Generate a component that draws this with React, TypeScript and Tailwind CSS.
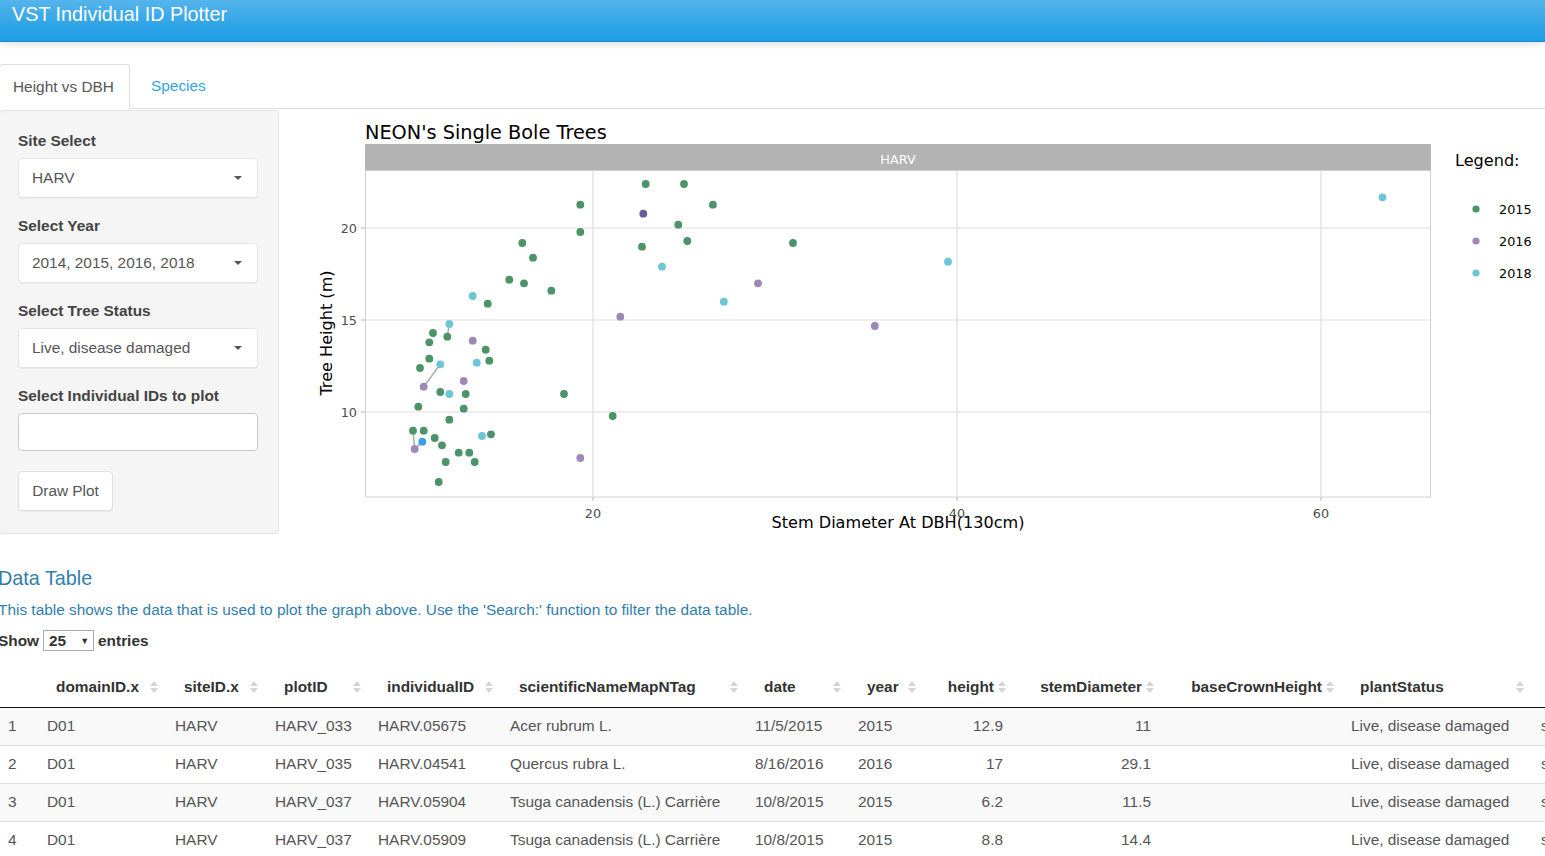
import React from "react";

const G = "#4b9368";
const P = "#9e89b6";
const C = "#6dc6d6";

const points: [number, number, string][] = [
  [645.7, 184, G], [684, 184, G], [580.3, 204.7, G], [712.9, 204.7, G], [678.3, 224.7, G],
  [580.3, 232, G], [642, 246.7, G], [687.3, 241, G], [793, 243, G], [522.3, 243, G],
  [533, 257.7, G], [509.3, 279.7, G], [524, 283.3, G], [551.3, 290.7, G], [487.7, 303.7, G],
  [447.3, 336.7, G], [433, 333, G], [429.3, 342.3, G], [485.7, 349.7, G], [489.3, 360.7, G],
  [429.3, 358.7, G], [420, 368, G], [440.3, 392, G], [465.7, 394, G], [564, 394, G],
  [418.3, 406.7, G], [463.7, 408.7, G], [449.3, 419.7, G], [612.7, 416, G], [413, 430.7, G],
  [423.7, 430.7, G], [491, 434.3, G], [434.7, 438, G], [442, 445.3, G], [458.7, 452.7, G],
  [469.3, 452.7, G], [445.7, 462, G], [474.7, 462, G], [438.7, 482, G],
  [472.7, 340.7, P], [463.7, 381, P], [423.7, 386.7, P], [620.3, 316.7, P], [414.7, 449, P],
  [580.3, 458, P], [758, 283.3, P], [874.8, 326, P],
  [449.3, 324, C], [476.7, 362.7, C], [440.3, 364.3, C], [449.3, 394, C], [482, 436, C],
  [662, 266.7, C], [472.7, 296, C], [1382.5, 197.3, C], [948, 261.7, C], [723.8, 301.7, C],
  [422.3, 441.7, "#3aa0de"], [643.3, 213.7, "#60609a"],
];

const links: [number, number, number, number][] = [
  [423.7, 386.7, 440.3, 364.3],
  [413, 430.7, 414.7, 449],
  [414.7, 449, 422.3, 441.7],
  [449.3, 324, 447.3, 336.7],
];

function Plot() {
  const font = "'DejaVu Sans', Verdana, sans-serif";
  return (
    <svg width={1265} height={430} viewBox="280 110 1265 430" style={{ fontFamily: font }}>
      <text x={365} y={139} fontSize={19.3} fill="#000">NEON's Single Bole Trees</text>
      <rect x={365} y={144} width={1066} height={26} fill="#b3b3b3" />
      <text x={898} y={163.5} fontSize={12.8} fill="#ffffff" textAnchor="middle">HARV</text>
      <rect x={365.5} y={170.5} width={1065} height={326.5} fill="#fff" stroke="#cfcfcf" />
      {[228, 320, 412].map((y) => (
        <line key={y} x1={366} x2={1430} y1={y} y2={y} stroke="#dedede" strokeWidth={1.2} />
      ))}
      {[593, 957, 1321].map((x) => (
        <line key={x} x1={x} x2={x} y1={171} y2={496} stroke="#dedede" strokeWidth={1.2} />
      ))}
      {[593, 957, 1321].map((x) => (
        <line key={"t" + x} x1={x} x2={x} y1={497} y2={501} stroke="#b3b3b3" />
      ))}
      {[228, 320, 412].map((y) => (
        <line key={"t" + y} x1={361} x2={365} y1={y} y2={y} stroke="#b3b3b3" />
      ))}
      {[
        [228, "20"],
        [320, "15"],
        [412, "10"],
      ].map(([y, t]) => (
        <text key={t} x={357} y={(y as number) + 4.5} fontSize={12.8} fill="#4d4d4d" textAnchor="end">
          {t}
        </text>
      ))}
      {[
        [593, "20"],
        [957, "40"],
        [1321, "60"],
      ].map(([x, t]) => (
        <text key={t} x={x as number} y={518} fontSize={12.8} fill="#4d4d4d" textAnchor="middle">
          {t}
        </text>
      ))}
      <text x={898} y={528} fontSize={16.1} fill="#000" textAnchor="middle">
        Stem Diameter At DBH(130cm)
      </text>
      <text
        x={0}
        y={0}
        fontSize={16.1}
        fill="#000"
        textAnchor="middle"
        transform="translate(332 333) rotate(-90)"
      >
        Tree Height (m)
      </text>
      {links.map(([x1, y1, x2, y2], i) => (
        <line key={i} x1={x1} y1={y1} x2={x2} y2={y2} stroke="#a3b5a8" strokeWidth={1.6} />
      ))}
      {points.map(([x, y, c], i) => (
        <circle key={i} cx={x} cy={y} r={3.9} fill={c} />
      ))}
      <text x={1455} y={165.5} fontSize={16.1} fill="#000">Legend:</text>
      {[
        [209, "2015", G],
        [241, "2016", P],
        [273, "2018", C],
      ].map(([y, t, c]) => (
        <g key={t as string}>
          <circle cx={1476} cy={y as number} r={3.6} fill={c as string} />
          <text x={1499} y={(y as number) + 4.5} fontSize={12.8} fill="#000">
            {t}
          </text>
        </g>
      ))}
    </svg>
  );
}

function Caret() {
  return (
    <span className="ml-auto w-0 h-0 border-l-[4px] border-r-[4px] border-t-[4px] border-l-transparent border-r-transparent border-t-[#555]" />
  );
}

function SelectBox({ value }: { value: string }) {
  return (
    <div className="flex items-center h-[40px] w-[240px] rounded-[4px] border border-[#e6e6e6] bg-white pl-[13px] pr-[15px] text-[15.4px] text-[#555] shadow-[0_1px_1px_rgba(0,0,0,0.05)]">
      <span>{value}</span>
      <Caret />
    </div>
  );
}

function Sidebar() {
  const label = "block text-[15.4px] font-bold text-[#444] leading-[20px] mb-[7px]";
  return (
    <div className="w-[280px] shrink-0 ml-[-1px] self-start rounded-[4px] border border-[#e3e3e3] bg-[#f5f5f5] pt-[20px] pb-[22px] pl-[18px]">
      <div className="mb-[18px]">
        <label className={label}>Site Select</label>
        <SelectBox value="HARV" />
      </div>
      <div className="mb-[18px]">
        <label className={label}>Select Year</label>
        <SelectBox value="2014, 2015, 2016, 2018" />
      </div>
      <div className="mb-[18px]">
        <label className={label}>Select Tree Status</label>
        <SelectBox value="Live, disease damaged" />
      </div>
      <div className="mb-[20px]">
        <label className={label}>Select Individual IDs to plot</label>
        <input className="block h-[38px] w-[240px] rounded-[4px] border border-[#c8c8c8] bg-white outline-none" />
      </div>
      <button className="h-[40px] w-[95px] rounded-[4px] border border-[#e0e0e0] bg-white text-[15.4px] text-[#555] shadow-[0_1px_1px_rgba(0,0,0,0.05)]">
        Draw Plot
      </button>
    </div>
  );
}

function SortIcon() {
  return (
    <svg width="8" height="12" viewBox="0 0 8 12" className="shrink-0">
      <path d="M4 0 L8 5 L0 5 Z" fill="#d5d5d5" />
      <path d="M0 7 L8 7 L4 12 Z" fill="#d5d5d5" />
    </svg>
  );
}

type Col = { key: string; w: number; right?: boolean; sort?: boolean };

const cols: Col[] = [
  { key: "", w: 37 },
  { key: "domainID.x", w: 128, sort: true },
  { key: "siteID.x", w: 100, sort: true },
  { key: "plotID", w: 103, sort: true },
  { key: "individualID", w: 132, sort: true },
  { key: "scientificNameMapNTag", w: 245, sort: true },
  { key: "date", w: 103, sort: true },
  { key: "year", w: 75, sort: true },
  { key: "height", w: 90, right: true, sort: true },
  { key: "stemDiameter", w: 148, right: true, sort: true },
  { key: "baseCrownHeight", w: 180, right: true, sort: true },
  { key: "plantStatus", w: 190, sort: true },
  { key: "", w: 200 },
];

const rows = [
  ["1", "D01", "HARV", "HARV_033", "HARV.05675", "Acer rubrum L.", "11/5/2015", "2015", "12.9", "11", "", "Live, disease damaged", "sub"],
  ["2", "D01", "HARV", "HARV_035", "HARV.04541", "Quercus rubra L.", "8/16/2016", "2016", "17", "29.1", "", "Live, disease damaged", "sub"],
  ["3", "D01", "HARV", "HARV_037", "HARV.05904", "Tsuga canadensis (L.) Carrière", "10/8/2015", "2015", "6.2", "11.5", "", "Live, disease damaged", "sub"],
  ["4", "D01", "HARV", "HARV_037", "HARV.05909", "Tsuga canadensis (L.) Carrière", "10/8/2015", "2015", "8.8", "14.4", "", "Live, disease damaged", "sub"],
];

function DataTable() {
  return (
    <div className="w-full overflow-hidden">
      <table className="table-fixed border-collapse" style={{ width: cols.reduce((a, c) => a + c.w, 0) }}>
        <colgroup>
          {cols.map((c, i) => (
            <col key={i} style={{ width: c.w }} />
          ))}
        </colgroup>
        <thead>
          <tr className="border-b border-[#111]">
            {cols.map((c, i) => (
              <th key={i} className="h-[40px] p-0 text-[15.4px] font-bold text-[#333] whitespace-nowrap">
                {c.sort && (
                  <div className={`flex items-center pr-[7px] ${c.right ? "justify-end" : "pl-[19px]"}`}>
                    <span>{c.key}</span>
                    <span className={c.right ? "ml-[4px]" : "ml-auto"}>
                      <SortIcon />
                    </span>
                  </div>
                )}
              </th>
            ))}
          </tr>
        </thead>
        <tbody>
          {rows.map((r, ri) => (
            <tr key={ri} className={`border-b border-[#ddd] ${ri % 2 === 0 ? "bg-[#f9f9f9]" : "bg-white"}`}>
              {r.map((v, ci) => (
                <td
                  key={ci}
                  className={`h-[38px] py-0 text-[15.4px] text-[#555] whitespace-nowrap ${
                    ci === 0 ? "pl-[8px]" : "px-[10px]"
                  } ${cols[ci].right ? "text-right" : "text-left"}`}
                >
                  {v}
                </td>
              ))}
            </tr>
          ))}
        </tbody>
      </table>
    </div>
  );
}

export default function App() {
  return (
    <div
      className="w-[1545px] h-[856px] overflow-hidden bg-white text-[#555]"
      style={{ fontFamily: "'Liberation Sans', Arial, sans-serif" }}
    >
      <header className="h-[42px] border-b border-[#178acc] bg-linear-to-b from-[#54b4eb] via-[#2fa4e7] via-60% to-[#1d9ce5] shadow-[0_2px_8px_rgba(0,0,0,0.12)] pl-[12px]">
        <span className="block text-[19.8px] leading-[28px] text-white">VST Individual ID Plotter</span>
      </header>

      <div className="mt-[22px] flex border-b border-[#ddd] h-[45px]">
        <div className="w-[131px] ml-[-1px] -mb-px rounded-t-[4px] border border-b-0 border-[#ddd] bg-white pl-[13px] flex items-center text-[15.4px] text-[#555]">
          Height vs DBH
        </div>
        <div className="pl-[21px] flex items-center text-[15.4px] text-[#2fa4e7]">Species</div>
      </div>

      <div className="mt-[1px] flex h-[431px]">
        <Sidebar />
        <div className="ml-[1px]">
          <Plot />
        </div>
      </div>

      <div className="ml-[-2px]">
        <h3 className="mt-[26px] text-[19.8px] leading-[22px] text-[#317eac]">Data Table</h3>
        <p className="mt-[11px] text-[15.4px] leading-[20px] text-[#317eac]">
          This table shows the data that is used to plot the graph above. Use the 'Search:' function to filter the data table.
        </p>
        <div className="mt-[10px] flex items-center text-[15.4px] font-bold text-[#333] leading-[20px]">
          <span>Show</span>
          <span className="ml-[4px] flex items-center h-[21px] w-[51px] border border-[#aaa] bg-white pl-[5px] pr-[4px]">
            25
            <span className="ml-auto text-[9px]">▼</span>
          </span>
          <span className="ml-[4px]">entries</span>
        </div>
      </div>

      <div className="mt-[16px]">
        <DataTable />
      </div>
    </div>
  );
}
